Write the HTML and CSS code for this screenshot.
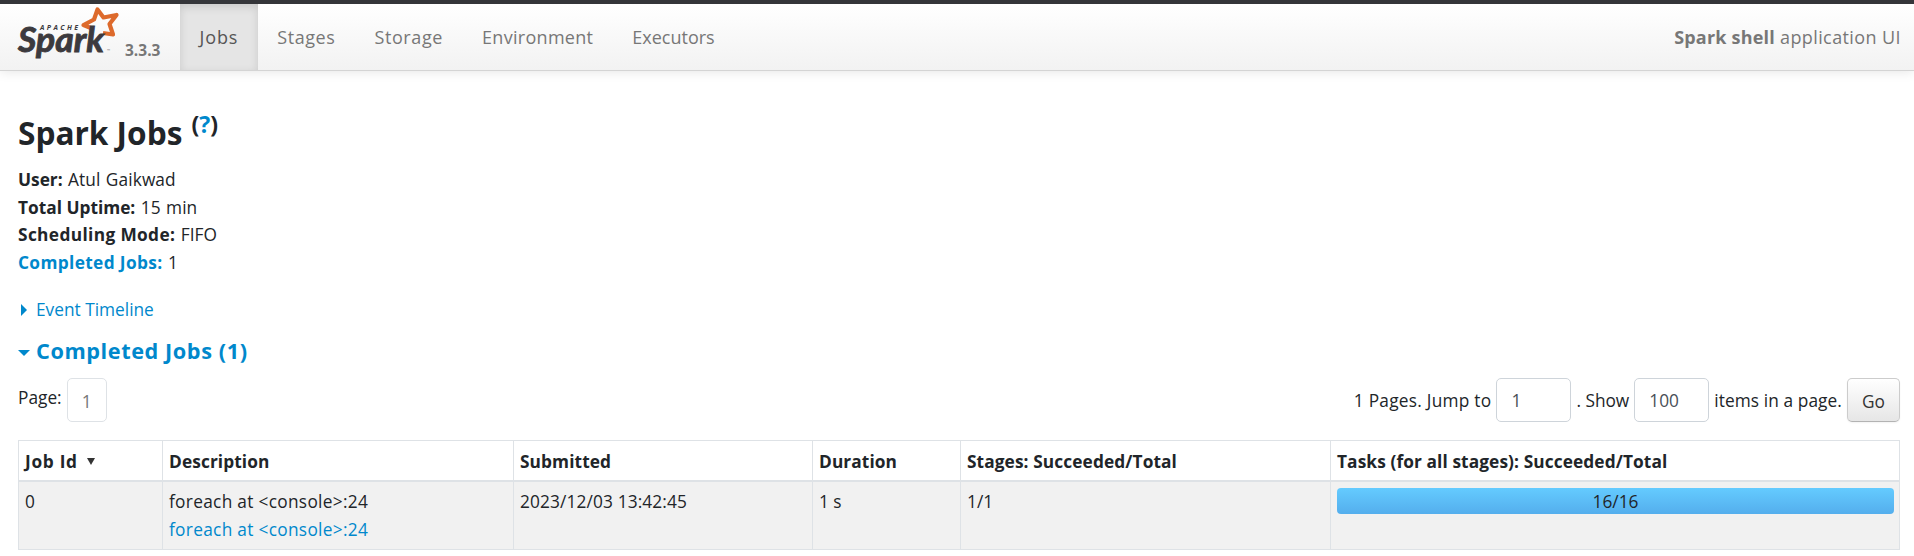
FILE: index.html
```html
<!DOCTYPE html>
<html lang="en">
<head>
<meta charset="utf-8">
<title>Spark shell - Spark Jobs</title>
<link rel="stylesheet" href="styles.css">
</head>
<body>
<header class="navbar">
  <a class="brand" href="#">
    <svg class="logo" width="92" height="54" viewBox="16 6 92 54" role="img" aria-label="Apache Spark">
      <path class="star" d="M92 28.5 L83.5 25 L94 19.5 L97.5 9.5 L103.5 17.5 L116.5 15 L109.5 24 L113 34.5 L103 33"/>
      <text class="logo-top" x="40" y="30" textLength="38">APACHE</text>
      <text class="logo-name" x="18" y="51.5" textLength="86" lengthAdjust="spacingAndGlyphs">Spark</text>
      <text class="logo-tm" x="107" y="52">™</text>
    </svg>
    <span class="version">3.3.3</span>
  </a>
  <nav class="tabs">
    <a class="tab tab-jobs active" href="#">Jobs</a>
    <a class="tab tab-stages" href="#">Stages</a>
    <a class="tab tab-storage" href="#">Storage</a>
    <a class="tab tab-env" href="#">Environment</a>
    <a class="tab" href="#">Executors</a>
  </nav>
  <p class="app-name"><strong>Spark shell</strong> application UI</p>
</header>
<main class="content">
  <h1 class="title">Spark Jobs <sup>(<a href="#">?</a>)</sup></h1>
  <ul class="summary">
    <li><strong>User:</strong> Atul Gaikwad</li>
    <li><strong>Total Uptime:</strong> 15 min</li>
    <li><strong class="wide">Scheduling Mode:</strong> FIFO</li>
    <li><a href="#"><strong class="wide">Completed Jobs:</strong></a> 1</li>
  </ul>
  <a class="timeline" href="#"><i class="arrow-right"></i><span>Event Timeline</span></a>
  <h2 class="section"><i class="arrow-down"></i><span>Completed Jobs (1)</span></h2>
  <div class="pager">
    <div class="pages"><span>Page:</span><a class="page" href="#">1</a></div>
    <form class="jump">
      <span class="jump-label">1 Pages. Jump to</span><input class="num" value="1">
      <span>. Show</span><input class="num" value="100">
      <span class="items-label">items in a page.</span><button class="go" type="button">Go</button>
    </form>
  </div>
  <table class="jobs">
    <colgroup><col class="c-id"><col class="c-desc"><col class="c-sub"><col class="c-dur"><col class="c-stages"><col class="c-tasks"></colgroup>
    <thead><tr>
      <th><span class="job-id">Job Id</span> <i class="sort"></i></th><th>Description</th><th>Submitted</th><th>Duration</th><th>Stages: Succeeded/Total</th><th>Tasks (for all stages): Succeeded/Total</th>
    </tr></thead>
    <tbody><tr>
      <td>0</td>
      <td class="desc">foreach at &lt;console&gt;:24<br><a href="#">foreach at &lt;console&gt;:24</a></td>
      <td class="date">2023/12/03 13:42:45</td>
      <td>1 s</td>
      <td>1/1</td>
      <td><div class="progress">16/16</div></td>
    </tr></tbody>
  </table>
</main>
</body>
</html>
```
FILE: styles.css
```css
* { box-sizing: border-box; }
body {
  margin: 0;
  background: #fff;
  color: #212529;
  font-family: "Open Sans", "Noto Sans", sans-serif;
  font-size: 17.3px;
  line-height: 27.6px;
}
a { color: #0088cc; text-decoration: none; }
.navbar {
  display: flex;
  height: 71px;
  border-top: 4px solid #35363a;
  border-bottom: 1px solid #d4d4d4;
  background: linear-gradient(#fff, #f2f2f2);
  box-shadow: 0 1px 11px rgba(0, 0, 0, 0.1);
}
.brand { display: flex; width: 180px; padding: 2px 0 0 16px; }
.logo { overflow: visible; flex: none; }
.star { fill: none; stroke: #dd6a2c; stroke-width: 4.2; stroke-linejoin: round; }
.logo-top { font: italic 700 7px "Open Sans", sans-serif; fill: #3c3a3e; }
.logo-name { font: italic 700 34px "Lato", sans-serif; fill: #3c3a3e; stroke: #3c3a3e; stroke-width: 0.9; }
.logo-tm { font: 4px "Open Sans", sans-serif; fill: #777; }
.version { margin: 31px 0 0 17px; color: #777; font-size: 15.5px; font-weight: 700; }
.tabs { display: flex; }
.tab { padding: 19px 19.5px 0; color: #777; font-size: 18px; line-height: 28px; }
.active { background: #e5e5e5; color: #555; box-shadow: inset 0 3px 8px rgba(0, 0, 0, 0.125); }
.tab-jobs { letter-spacing: 0.9px; }
.tab-stages { letter-spacing: 0.55px; }
.tab-storage { letter-spacing: 0.6px; }
.tab-env { letter-spacing: 0.3px; }
.app-name { margin: 19px 13px 0 auto; color: #777; font-size: 18px; line-height: 28px; letter-spacing: 0.4px; }
.app-name strong { letter-spacing: 0.2px; }
.content { padding: 41px 14px 0 18px; }
.title { margin: 0; height: 54px; font-size: 31.6px; line-height: 42px; }
.title sup { margin-left: 1px; font-size: 23px; line-height: 0; vertical-align: 12px; }
.summary { margin: 0; padding: 0; list-style: none; word-spacing: 0.8px; letter-spacing: 0.1px; }
.summary strong { word-spacing: 0; letter-spacing: 0; }
.summary .wide { letter-spacing: 0.36px; }
.timeline { display: flex; align-items: center; margin-top: 20px; }
.arrow-right { width: 6px; margin: 0 9px 0 3px; border: 6px solid transparent; border-left-color: #0088cc; border-right: 0; }
.arrow-down { width: 12px; margin: 5px 6px 0 0; border: 6px solid transparent; border-top-color: #0088cc; border-bottom: 0; }
.section { display: flex; align-items: center; margin: 10px 0 0; color: #0088cc; font-size: 21.7px; line-height: 33px; letter-spacing: 0.58px; }
.pager { display: flex; justify-content: space-between; margin-top: 11px; height: 44px; }
.pages, .jump { display: flex; }
.pages { line-height: 40px; }
.page { width: 40px; height: 44px; margin-left: 5px; border: 1px solid #dee2e6; border-radius: 5px; color: #777; line-height: 45px; text-align: center; }
.jump { line-height: 45px; }
.jump-label { letter-spacing: 0.25px; }
.items-label { letter-spacing: 0.09px; }
.num { width: 75px; height: 44px; margin: 0 5px; padding: 2px 14px 0; border: 1px solid #ced4da; border-radius: 5px; color: #495057; font: inherit; }
.go { width: 53px; height: 44px; margin-left: 5px; padding: 0; border: 1px solid #ccc; border-bottom-color: #b3b3b3; border-radius: 5px; background: linear-gradient(#fff, #e6e6e6); box-shadow: 0 1px 2px rgba(0, 0, 0, 0.05); color: #333; font: inherit; }
.jobs { width: 1882px; margin-top: 18px; border-collapse: collapse; table-layout: fixed; }
.jobs th, .jobs td { border: 1px solid #dee2e6; text-align: left; vertical-align: top; }
.jobs th { height: 41px; padding: 7px 5px 4px 6px; border-bottom-width: 2px; letter-spacing: 0.1px; line-height: 27px; }
.jobs td { height: 68px; padding: 6px 5px 4px 6px; background: #f1f1f1; line-height: 28px; }
.c-id { width: 144px; }
.c-desc { width: 351px; }
.c-sub { width: 299px; }
.c-dur { width: 148px; }
.c-stages { width: 370px; }
.job-id { letter-spacing: 0.7px; }
.jobs .desc { letter-spacing: 0.3px; }
.jobs .date { letter-spacing: 0.13px; }
.sort { display: inline-block; margin: 0 0 3px 5px; border: 4px solid transparent; border-top: 7px solid #333; border-bottom: 0; }
.progress { height: 26px; border-radius: 4px; background: linear-gradient(#64cbff, #54aeed); text-align: center; }
```
